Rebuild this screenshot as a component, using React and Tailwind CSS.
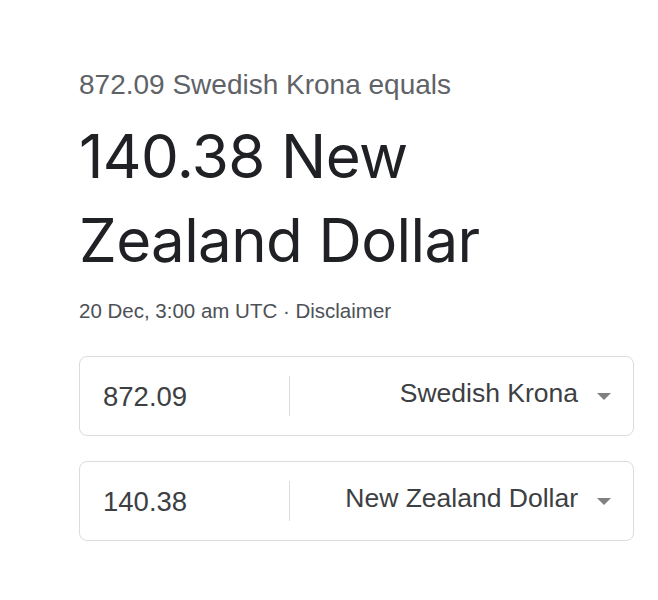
import React from "react";

const Row = ({ amount, currency }) => (
  <div className="flex items-center h-[80px] border border-[#dadce0] rounded-[8px] bg-white">
    <div className="w-[209px] pl-[23px] pt-[2px] text-[27.5px] text-[#3c4043]">{amount}</div>
    <div className="w-px h-[40px] bg-[#dadce0]" />
    <div className="flex-1 flex items-center justify-end pr-[22px] text-[26.5px] text-[#3c4043]">
      <span className="-mt-[4px]">{currency}</span>
      <svg width="14" height="7" viewBox="0 0 14 7" className="ml-[19px]">
        <path d="M0 0 L14 0 L7 7 Z" fill="#808080" />
      </svg>
    </div>
  </div>
);

export default function App() {
  return (
    <div className="min-h-[600px] w-[658px] bg-white px-[79px] pt-[66px] font-['Liberation_Sans',Arial,sans-serif]">
      <div className="text-[28px] leading-[38px] text-[#5f6368]">872.09 Swedish Krona equals</div>
      <div className="mt-[10px] font-['Inter',sans-serif] text-[60px] leading-[84px] text-[#202124] tracking-[-0.6px]">
        140.38 New
        <br />
        Zealand Dollar
      </div>
      <div className="mt-[14px] text-[20.5px] leading-[30px] text-[#4d5156]">
        20 Dec, 3:00 am UTC · Disclaimer
      </div>
      <div className="mt-[30px] flex flex-col gap-[25px] w-[555px]">
        <Row amount="872.09" currency="Swedish Krona" />
        <Row amount="140.38" currency="New Zealand Dollar" />
      </div>
    </div>
  );
}
